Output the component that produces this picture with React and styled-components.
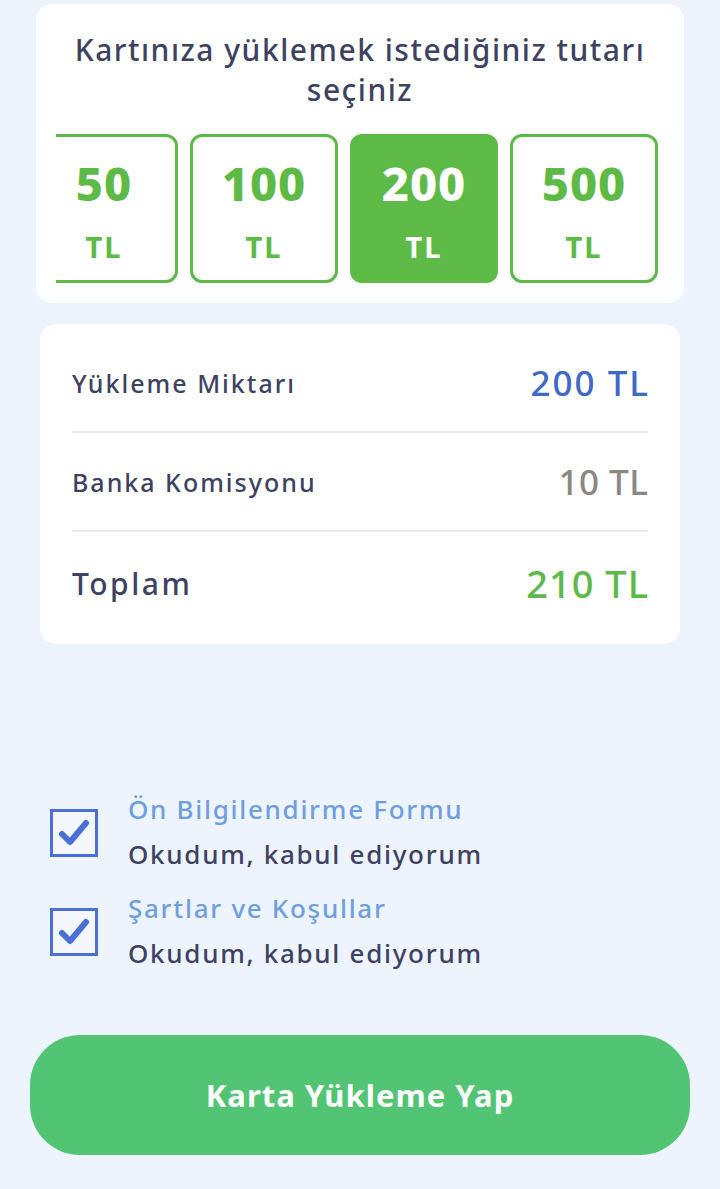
import React, { useLayoutEffect, useRef } from "react";
import styled, { createGlobalStyle } from "styled-components";

const Global = createGlobalStyle`
  html, body { margin: 0; padding: 0; background: #eef4fe; }
  body { font-family: "Noto Sans", "Open Sans", sans-serif; color: #3d4263; }
  * { box-sizing: border-box; }
`;

const Page = styled.div`
  width: 720px;
  height: 1189px;
  background: #eef4fe;
  display: flex;
  flex-direction: column;
  align-items: center;
  padding-top: 4px;
  overflow: hidden;
`;

const SelectCard = styled.section`
  width: 648px;
  background: #fff;
  border-radius: 16px;
  padding: 26px 20px 20px;
  display: flex;
  flex-direction: column;
  align-items: center;
`;

const Title = styled.h2`
  margin: 0 0 24px;
  font-size: 30px;
  line-height: 40px;
  font-weight: 500;
  text-align: center;
  color: #3d4263;
  letter-spacing: 1.5px;
  white-space: nowrap;
`;

const Scroller = styled.div`
  width: 608px;
  overflow-x: auto;
  scrollbar-width: none;
  &::-webkit-scrollbar { display: none; }
`;

const Track = styled.div`
  display: flex;
  gap: 12px;
  padding-right: 6px;
  width: max-content;
`;

const Tile = styled.button`
  width: 148px;
  height: 149px;
  flex: none;
  border-radius: 12px;
  border: 3px solid #5dba47;
  background: ${p => (p.$active ? "#5dba47" : "#fff")};
  color: ${p => (p.$active ? "#fff" : "#5dba47")};
  display: flex;
  flex-direction: column;
  align-items: center;
  justify-content: flex-start;
  padding: 14px 0 0;
  font-family: "Noto Sans", sans-serif;
  cursor: pointer;
`;

const TileAmount = styled.span`
  font-size: 47px;
  line-height: 64px;
  font-weight: 800;
  letter-spacing: 1px;
`;

const TileUnit = styled.span`
  margin-top: 15px;
  font-size: 29px;
  line-height: 34px;
  font-weight: 700;
  letter-spacing: 2px;
`;

const SummaryCard = styled.section`
  margin-top: 21px;
  width: 640px;
  background: #fff;
  border-radius: 16px;
  padding: 10px 32px;
  display: flex;
  flex-direction: column;
`;

const Row = styled.div`
  display: flex;
  align-items: center;
  justify-content: space-between;
  height: ${p => p.$h || 99}px;
  border-bottom: ${p => (p.$last ? "none" : "2px solid #e9eaee")};
`;

const RowLabel = styled.span`
  font-size: ${p => p.$size || 25}px;
  font-weight: 500;
  color: #3d4263;
  letter-spacing: ${p => p.$ls ?? 2}px;
`;

const RowValue = styled.span`
  font-size: ${p => p.$size || 35}px;
  font-weight: 500;
  color: ${p => p.$color};
  letter-spacing: ${p => p.$ls ?? 2}px;
  margin-right: ${p => -(p.$ls ?? 2)}px;
`;

const Agreements = styled.div`
  margin-top: 143px;
  width: 720px;
  padding-left: 50px;
  display: flex;
  flex-direction: column;
  gap: 9px;
`;

const Agreement = styled.label`
  display: flex;
  align-items: center;
  gap: 30px;
`;

const Box = styled.span`
  width: 48px;
  height: 48px;
  flex: none;
  border: 3px solid #4a6fd6;
  background: #f4f7fe;
  display: flex;
  align-items: center;
  justify-content: center;
  margin-top: 2px;
`;

const Texts = styled.span`
  display: flex;
  flex-direction: column;
`;

const LinkText = styled.span`
  font-size: 26px;
  line-height: 45px;
  font-weight: 500;
  color: #6f9fe0;
  letter-spacing: 1.7px;
`;

const SubText = styled.span`
  font-size: 26px;
  line-height: 45px;
  font-weight: 500;
  color: #3d4263;
  letter-spacing: 1.7px;
`;

const SubmitButton = styled.button`
  margin-top: 59px;
  width: 660px;
  height: 120px;
  border: none;
  border-radius: 50px;
  background: #52c574;
  color: #fff;
  font-family: "Noto Sans", sans-serif;
  font-size: 31px;
  font-weight: 700;
  letter-spacing: 1px;
  cursor: pointer;
`;

const Check = () => (
  <svg width="36" height="36" viewBox="0 0 36 36">
    <path
      d="M6 19 L14 27 L30 8"
      fill="none"
      stroke="#4a6fd6"
      strokeWidth="6"
      strokeLinecap="round"
      strokeLinejoin="round"
    />
  </svg>
);

const amounts = [50, 100, 200, 500];

export default function App() {
  const ref = useRef(null);
  useLayoutEffect(() => {
    if (ref.current) ref.current.scrollLeft = 26;
  }, []);
  return (
    <Page>
      <Global />
      <SelectCard>
        <Title>
          Kartınıza yüklemek istediğiniz tutarı
          <br />
          seçiniz
        </Title>
        <Scroller ref={ref}>
          <Track>
            {amounts.map(a => (
              <Tile key={a} $active={a === 200}>
                <TileAmount>{a}</TileAmount>
                <TileUnit>TL</TileUnit>
              </Tile>
            ))}
          </Track>
        </Scroller>
      </SelectCard>

      <SummaryCard>
        <Row>
          <RowLabel>Yükleme Miktarı</RowLabel>
          <RowValue $color="#3e68c9">200 TL</RowValue>
        </Row>
        <Row>
          <RowLabel>Banka Komisyonu</RowLabel>
          <RowValue $color="#8a8784" $ls={0.5}>10 TL</RowValue>
        </Row>
        <Row $last $h={102}>
          <RowLabel $size={30} $ls={2.5}>Toplam</RowLabel>
          <RowValue $size={38} $ls={1} $color="#5cb94a">210 TL</RowValue>
        </Row>
      </SummaryCard>

      <Agreements>
        <Agreement>
          <Box><Check /></Box>
          <Texts>
            <LinkText>Ön Bilgilendirme Formu</LinkText>
            <SubText>Okudum, kabul ediyorum</SubText>
          </Texts>
        </Agreement>
        <Agreement>
          <Box><Check /></Box>
          <Texts>
            <LinkText>Şartlar ve Koşullar</LinkText>
            <SubText>Okudum, kabul ediyorum</SubText>
          </Texts>
        </Agreement>
      </Agreements>

      <SubmitButton>Karta Yükleme Yap</SubmitButton>
    </Page>
  );
}
